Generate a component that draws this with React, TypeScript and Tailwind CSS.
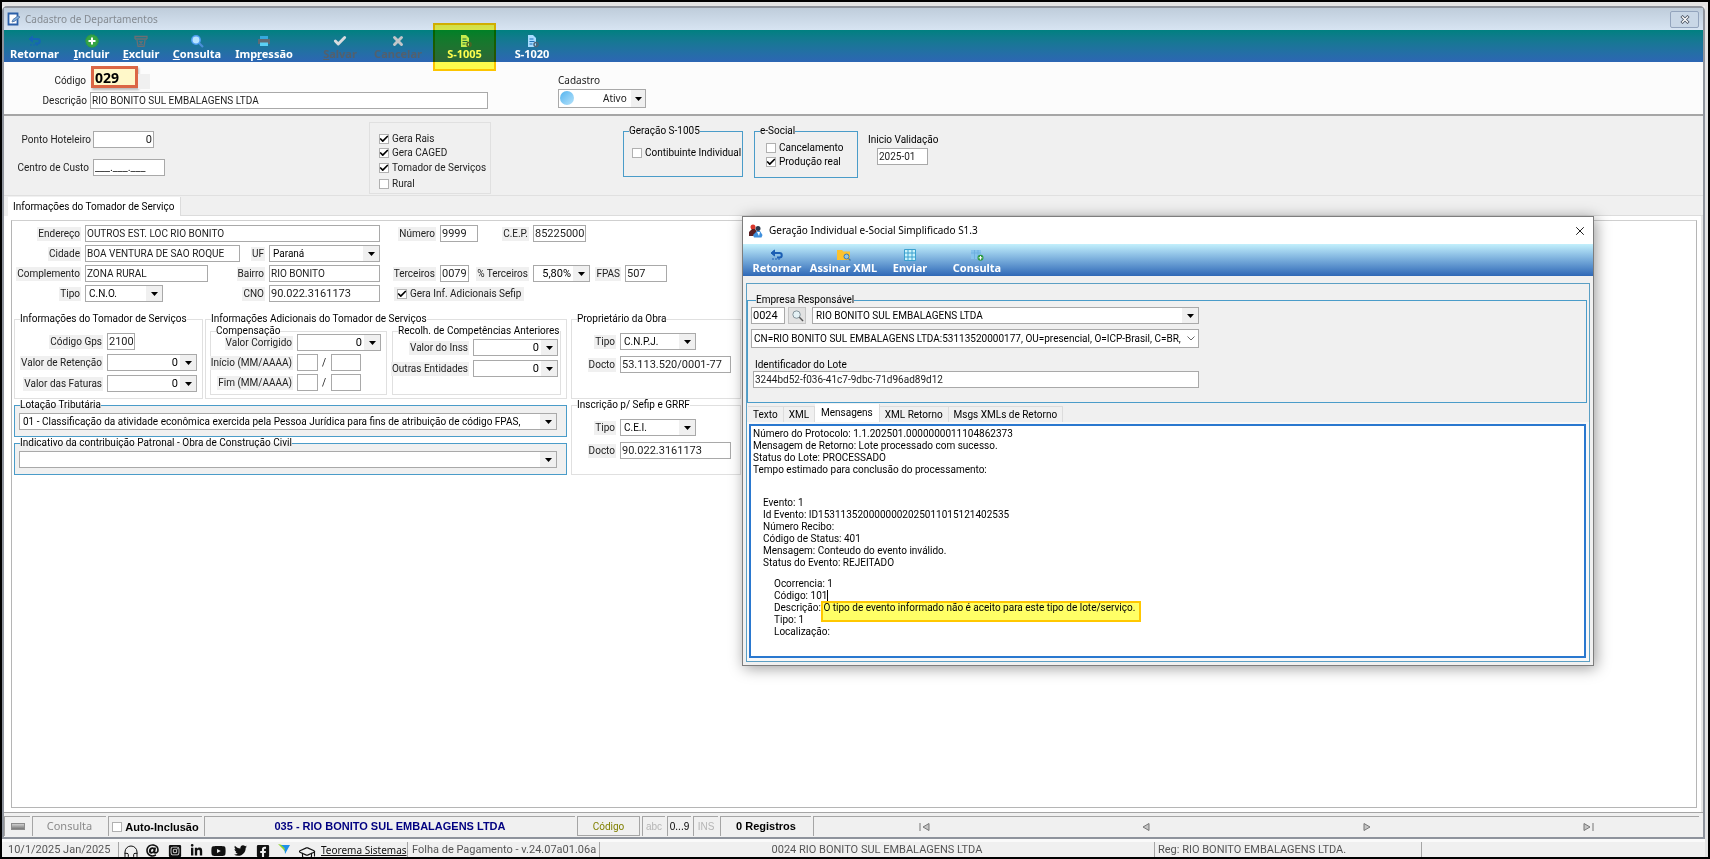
import type { ReactNode } from "react";
import clsx from "clsx";
import { FaAt, FaFacebookSquare, FaInstagramSquare, FaLinkedinIn, FaTwitter, FaYoutube } from "react-icons/fa";
import { Check, GraduationCap, Headphones, X } from "lucide-react";

const box = "border border-[#a9a9a9] bg-white leading-[13px] text-[#1c1c1c] outline-none";

function Caret() {
  return (
    <svg viewBox="0 0 7 4" className="h-1 w-[7px]" aria-hidden="true">
      <path d="M0 0h7L3.5 4z" fill="#000" />
    </svg>
  );
}

function Label({ id, className, children }: { id: string; className?: string; children: ReactNode }) {
  return (
    <div className={clsx("flex shrink-0 justify-end", className)}>
      <label htmlFor={id} className="bg-[#f0f0f0] px-px leading-[14px] whitespace-nowrap">
        {children}
      </label>
    </div>
  );
}

function TextBox({ id, value, numeric, className }: { id: string; value?: string; numeric?: boolean; className?: string }) {
  return (
    <input
      id={id}
      type="text"
      defaultValue={value}
      className={clsx(box, numeric ? "text-[11px]" : "text-[10px]", "h-[17px] shrink-0 px-px pb-px", className)}
    />
  );
}

function Combo({ id, value, className, label }: { id: string; value: string; className?: string; label?: string }) {
  return (
    <div className={clsx("relative h-[17px] shrink-0", className)}>
      <select id={id} aria-label={label} className={clsx(box, "h-full w-full appearance-none pr-4 pl-[3px] text-black")}>
        <option>{value}</option>
      </select>
      <span className="pointer-events-none absolute top-px right-px bottom-px flex w-4 items-center justify-center bg-[#f0f0f0]">
        <Caret />
      </span>
    </div>
  );
}

/** Numeric edit with a drop-down calculator button. */
function Calc({ id, value, className }: { id: string; value: string; className?: string }) {
  return (
    <div className={clsx("flex h-[17px] shrink-0 border border-[#a9a9a9] bg-white", className)}>
      <input
        id={id}
        type="text"
        defaultValue={value}
        className="min-w-0 flex-1 pr-[2px] text-right text-[11px] leading-[13px] text-black outline-none"
      />
      <button type="button" aria-label="Calculadora" className="flex w-4 items-center justify-center bg-[#f0f0f0]">
        <Caret />
      </button>
    </div>
  );
}

function Tick({ label, checked, className }: { label: string; checked?: boolean; className?: string }) {
  return (
    <label className={clsx("flex items-center gap-[3px] leading-[14px] whitespace-nowrap", className)}>
      <span className="relative flex h-[10px] w-[10px] shrink-0">
        <input
          type="checkbox"
          defaultChecked={checked}
          className="peer h-full w-full appearance-none border border-[#b0b0b0] bg-white"
        />
        <Check className="pointer-events-none absolute inset-0 hidden h-[10px] w-[10px] text-black peer-checked:block" strokeWidth={4} />
      </span>
      {label}
    </label>
  );
}

function Group({ title, blue, className, children }: { title: string; blue?: boolean; className?: string; children: ReactNode }) {
  return (
    <fieldset className={clsx("min-w-0 border", blue ? "border-[#4a9cc9]" : "border-[#e0e0e0]", className)}>
      <legend className="ml-[5px] h-3 leading-3 whitespace-nowrap text-black">{title}</legend>
      {children}
    </fieldset>
  );
}

function Row({ children }: { children: ReactNode }) {
  return <div className="flex h-[17px] items-center gap-1">{children}</div>;
}

function ReturnIcon({ color }: { color: string }) {
  return (
    <svg viewBox="0 0 14 12" className="h-3 w-[14px]" fill="none" stroke={color} aria-hidden="true">
      <path d="M3 4h6.500a2 2 0 0 1 0 4.500H7" strokeWidth="2" />
      <path d="M4.500 1v6L1 4z" fill={color} />
      <path d="M2 10h2M5 10h2M8 10h2" />
    </svg>
  );
}

function PlusIcon() {
  return (
    <svg viewBox="0 0 14 14" className="h-[14px] w-[14px]" aria-hidden="true">
      <circle cx="7" cy="7" r="6.300" fill="#35a445" stroke="#2b9a3f" strokeDasharray="2 1" />
      <path d="M7 3.500v7M3.500 7h7" stroke="#fff" strokeWidth="2" />
    </svg>
  );
}

function TrashIcon() {
  return (
    <svg viewBox="0 0 14 12" className="h-3 w-[14px]" fill="none" stroke="#6b6f73" aria-hidden="true">
      <path d="M1 4V1.500h12V4M1 4h12M3 5l1 6.500h6L11 5M5.500 6l3 4M8.500 6l-3 4" strokeWidth="1.300" />
    </svg>
  );
}

function LensIcon() {
  return (
    <svg viewBox="0 0 14 14" className="h-[14px] w-[14px]" aria-hidden="true">
      <path d="M8.500 8.500l4.500 4.500" stroke="#4b8fd8" strokeWidth="2.200" />
      <circle cx="6" cy="6" r="4.200" fill="#b7e3ff" stroke="#4d9df0" strokeWidth="1.500" />
    </svg>
  );
}

function PrinterIcon() {
  return (
    <svg viewBox="0 0 14 12" className="h-3 w-[14px]" aria-hidden="true">
      <path d="M3 1h8v3H3z" fill="#35a9dc" />
      <path d="M1 4h12v5H1z" fill="#5f6a74" />
      <path d="M3 7.500h8V11H3z" fill="#5bd0f5" />
    </svg>
  );
}

function SheetIcon({ color }: { color: string }) {
  return (
    <svg viewBox="0 0 14 14" className="h-[14px] w-[14px]" aria-hidden="true">
      <path d="M3 1h5l3 3v9H3z" fill={color} />
      <path d="M4.500 5h4M4.500 7.500h5M4.500 10h3" stroke="#1d6fb8" />
      <circle cx="11" cy="10.500" r="2" fill="none" stroke="#4e6478" strokeWidth="1.500" />
    </svg>
  );
}

function FolderLensIcon() {
  return (
    <svg viewBox="0 0 14 12" className="h-3 w-[14px]" aria-hidden="true">
      <path d="M0 1h5l1.500 1.500H13V11H0z" fill="#fcc22d" />
      <circle cx="9.500" cy="7.500" r="2.500" fill="#8ec7ea" stroke="#3d77ad" />
      <path d="M11.500 9.500l2 2" stroke="#3d77ad" strokeWidth="1.300" />
    </svg>
  );
}

function GridIcon() {
  return (
    <svg viewBox="0 0 12 12" className="h-3 w-3" aria-hidden="true">
      <path d="M1 1h10v10H1z" fill="#c9f3fb" />
      <path d="M.500.500h11v11H.500zM4 1v10M8 1v10M1 4h10M1 8h10" fill="none" stroke="#3ba0cf" />
    </svg>
  );
}

function GridPlusIcon() {
  return (
    <svg viewBox="0 0 14 12" className="h-3 w-[14px]" aria-hidden="true">
      <path d="M1 1h10v9H1z" fill="#86c3ec" />
      <path d="M4.500 1v9M8 1v9M1 4h10" stroke="#6fb0e0" />
      <circle cx="10.500" cy="8.800" r="3" fill="#2e9b44" />
      <path d="M10.500 7v3.600M8.700 8.800h3.600" stroke="#fff" />
    </svg>
  );
}

function FormIcon() {
  return (
    <svg viewBox="0 0 14 14" className="h-[14px] w-[14px]" aria-hidden="true">
      <path d="M1.500 1.500h9v11h-9z" fill="#fff" stroke="#2a5fa8" strokeWidth="1.800" />
      <path d="M13 5L8 9l-3 1 1-2.500L11 4z" stroke="#5a7fae" fill="#7fb0e0" />
    </svg>
  );
}

function PeopleIcon() {
  return (
    <svg viewBox="0 0 14 14" className="h-[14px] w-[14px]" aria-hidden="true">
      <circle cx="4" cy="3" r="2.500" fill="#d8382c" />
      <path d="M0 12V8l3-3h3l2 3-2 4z" fill="#5b1f22" />
      <circle cx="9" cy="4.500" r="2.500" fill="#2b3a4e" />
      <path d="M4 11l4-4h3l2.500 4-1 2.500H5z" fill="#3f8fdc" />
      <path d="M8 8l2 4 1-4z" fill="#fff" />
    </svg>
  );
}

function ToolButton({ icon, className, disabled, children }: { icon: ReactNode; className?: string; disabled?: boolean; children: ReactNode }) {
  return (
    <button
      type="button"
      disabled={disabled}
      className={clsx(
        "relative flex h-full shrink-0 flex-col items-center pt-1 text-[11px] leading-3 font-bold whitespace-nowrap",
        disabled ? "text-[#53606c]" : "text-white",
        className,
      )}
    >
      <span className="flex h-[14px] items-center">{icon}</span>
      <span>{children}</span>
    </button>
  );
}

const Key = ({ children }: { children: string }) => <span className="underline">{children}</span>;

function MainToolbar() {
  return (
    <div className="flex h-8 bg-linear-to-b from-[#008080] to-[#2d66b4] font-['Noto_Sans',sans-serif]">
      <ToolButton className="w-[61px]" icon={<ReturnIcon color="#1565b5" />}>Retornar</ToolButton>
      <ToolButton className="w-[53px]" icon={<PlusIcon />}><Key>I</Key>ncluir</ToolButton>
      <ToolButton className="w-[46px]" icon={<TrashIcon />}><Key>E</Key>xcluir</ToolButton>
      <ToolButton className="w-[66px]" icon={<LensIcon />}><Key>C</Key>onsulta</ToolButton>
      <ToolButton className="w-[68px]" icon={<PrinterIcon />}>Imp<Key>r</Key>essão</ToolButton>
      <ToolButton className="ml-[14px] w-[56px]" disabled icon={<Check className="h-[14px] w-[14px] text-[#d9dcdf]" strokeWidth={5} />}>
        <Key>S</Key>alvar
      </ToolButton>
      <ToolButton className="w-[60px]" disabled icon={<X className="h-[14px] w-[14px] text-[#c3c6c9]" strokeWidth={5} />}>
        Cancelar
      </ToolButton>
      <ToolButton className="ml-[5px] w-[63px]" icon={<SheetIcon color="#c6ecff" />}>
        S-1005
        <span className="absolute inset-x-0 -top-[7px] -bottom-[9px] z-10 border-2 border-[#ffc800] bg-[#ffff4d] mix-blend-multiply" />
      </ToolButton>
      <ToolButton className="ml-[6px] w-[60px]" icon={<SheetIcon color="#a9dcff" />}>S-1020</ToolButton>
    </div>
  );
}

function Header() {
  return (
    <div className="flex h-[54px] border-b-2 border-[#a6a6a6] bg-[#fcfcfc]">
      <div className="w-[554px] shrink-0">
        <div className="flex pt-1">
          <label htmlFor="codigo" className="mt-2 w-[83px] pr-px text-right leading-[14px]">Código</label>
          <input
            id="codigo"
            defaultValue="029"
            className="ml-[4px] h-[22px] w-[47px] border-3 border-[#db6645] bg-[#fff8c9] px-px font-['Noto_Sans',sans-serif] text-[14px] leading-4 font-bold text-black shadow-[1px_2px_2px_#bbb] outline-none"
          />
          <span className="mt-2 h-[15px] w-3 bg-[#f0f0f0]" />
        </div>
        <div className="mt-[3px] flex items-center gap-[3px]">
          <label htmlFor="descricao" className="w-[83px] text-right leading-[14px]">Descrição</label>
          <TextBox id="descricao" value="RIO BONITO SUL EMBALAGENS LTDA" className="w-[398px]" />
        </div>
      </div>
      <div className="pt-[11px] font-['Noto_Sans',sans-serif]">
        <label htmlFor="cadastro" className="block leading-[14px]">Cadastro</label>
        <div className="relative mt-[2px] h-[19px] w-[88px]">
          <select id="cadastro" className="h-full w-full appearance-none border border-[#a9a9a9] bg-white pl-11 leading-[15px] outline-none">
            <option>Ativo</option>
          </select>
          <span className="pointer-events-none absolute top-[2px] left-[2px] h-[14px] w-[14px] rounded-full bg-linear-to-br from-[#4fb3ee] to-[#b5e3fb]" />
          <span className="pointer-events-none absolute top-px right-px bottom-px flex w-[14px] items-center justify-center bg-[#f0f0f0]">
            <Caret />
          </span>
        </div>
      </div>
    </div>
  );
}

function Options() {
  return (
    <div className="flex h-[80px] border-b border-[#e0e0e0] pl-1">
      <div className="w-[361px] shrink-0 pt-[15px]">
        <div className="flex items-center gap-[2px]">
          <label htmlFor="ponto" className="w-[83px] text-right leading-[14px] whitespace-nowrap">Ponto Hoteleiro</label>
          <TextBox id="ponto" value="0" numeric className="w-[61px] text-right" />
        </div>
        <div className="mt-[11px] flex items-center gap-[2px]">
          <label htmlFor="centro" className="w-[83px] pr-[2px] text-right leading-[14px] whitespace-nowrap">Centro de Custo</label>
          <TextBox id="centro" value="___.___.___" numeric className="w-[72px]" />
        </div>
      </div>
      <div className="mt-[6px] h-[72px] w-[122px] shrink-0 border border-[#e0e0e0] pt-[9px] pl-[9px]">
        <Tick label="Gera Rais" checked />
        <Tick label="Gera CAGED" checked />
        <Tick label="Tomador de Serviços" checked className="mt-px" />
        <Tick label="Rural" className="mt-[2px]" />
      </div>
      <Group title="Geração S-1005" blue className="mt-[9px] ml-[132px] h-[52px] w-[120px] shrink-0">
        <Tick label="Contibuinte Individual" className="mt-[9px] ml-[8px] text-black" />
      </Group>
      <Group title="e-Social" blue className="mt-[9px] ml-[11px] h-[53px] w-[104px] shrink-0">
        <Tick label="Cancelamento" className="mt-[4px] ml-[11px] text-black" />
        <Tick label="Produção real" checked className="ml-[11px] text-black" />
      </Group>
      <div className="ml-[10px] pt-[17px] text-black">
        <label htmlFor="inicio" className="block leading-[14px]">Inicio Validação</label>
        <TextBox id="inicio" value="2025-01" className="mt-px ml-[9px] w-[51px]" />
      </div>
    </div>
  );
}

function ServiceForm() {
  return (
    <div className="flex-1 border border-[#b5b5b5] border-t-[#cfcfcf] bg-white pt-1">
      <div className="flex flex-col gap-[3px]">
        <Row>
          <Label id="endereco" className="w-[69px]">Endereço</Label>
          <TextBox id="endereco" value="OUTROS EST. LOC RIO BONITO" className="w-[295px]" />
          <Label id="numero" className="w-[52px]">Número</Label>
          <TextBox id="numero" value="9999" numeric className="w-[38px]" />
          <Label id="cep" className="w-[47px]">C.E.P.</Label>
          <TextBox id="cep" value="85225000" numeric className="w-[53px]" />
        </Row>
        <Row>
          <Label id="cidade" className="w-[69px]">Cidade</Label>
          <TextBox id="cidade" value="BOA VENTURA DE SAO ROQUE" className="w-[155px]" />
          <Label id="uf" className="w-[21px]">UF</Label>
          <Combo id="uf" value="Paraná" className="w-[111px]" />
        </Row>
        <Row>
          <Label id="complemento" className="w-[69px]">Complemento</Label>
          <TextBox id="complemento" value="ZONA RURAL" className="w-[123px]" />
          <Label id="bairro" className="w-[53px]">Bairro</Label>
          <TextBox id="bairro" value="RIO BONITO" className="w-[111px]" />
          <Label id="terceiros" className="w-[52px]">Terceiros</Label>
          <TextBox id="terceiros" value="0079" numeric className="w-[29px]" />
          <Label id="pterceiros" className="w-[56px]">% Terceiros</Label>
          <Calc id="pterceiros" value="5,80%" className="w-[57px]" />
          <Label id="fpas" className="w-[27px]">FPAS</Label>
          <TextBox id="fpas" value="507" numeric className="w-[42px]" />
        </Row>
        <Row>
          <Label id="tipo" className="w-[69px]">Tipo</Label>
          <Combo id="tipo" value="C.N.O." className="w-[78px]" />
          <Label id="cno" className="w-[98px]">CNO</Label>
          <TextBox id="cno" value="90.022.3161173" numeric className="w-[111px]" />
          <Tick label="Gera Inf. Adicionais Sefip" checked className="ml-[10px] bg-[#f0f0f0] px-[3px]" />
        </Row>
      </div>

      <div className="mt-[11px] flex gap-1 pl-[2px]">
        <div className="w-[553px] shrink-0">
          <div className="flex h-[86px] gap-[2px]">
            <Group title="Informações do Tomador de Serviços" className="w-[189px] shrink-0">
              <div className="flex flex-col gap-1 pt-2">
                <Row>
                  <Label id="gps" className="w-[88px]">Código Gps</Label>
                  <TextBox id="gps" value="2100" numeric className="w-[28px]" />
                </Row>
                <Row>
                  <Label id="retencao" className="w-[88px]">Valor de Retenção</Label>
                  <Calc id="retencao" value="0" className="w-[90px]" />
                </Row>
                <Row>
                  <Label id="faturas" className="w-[88px]">Valor das Faturas</Label>
                  <Calc id="faturas" value="0" className="w-[90px]" />
                </Row>
              </div>
            </Group>
            <Group title="Informações Adicionais do Tomador de Serviços" className="w-[362px] shrink-0">
              <div className="flex gap-[5px] pl-1">
                <Group title="Compensação" className="h-[70px] w-[177px] shrink-0">
                  <div className="-mt-[3px] flex flex-col gap-[3px]">
                    <Row>
                      <Label id="corrigido" className="w-[82px]">Valor Corrigido</Label>
                      <Calc id="corrigido" value="0" className="w-[84px]" />
                    </Row>
                    <Row>
                      <Label id="iniMes" className="w-[82px]">Início (MM/AAAA)</Label>
                      <TextBox id="iniMes" className="w-[21px]" />
                      <span className="w-[5px]">/</span>
                      <input aria-label="Ano de início" className={clsx(box, "h-[17px] w-[30px]")} />
                    </Row>
                    <Row>
                      <Label id="fimMes" className="w-[82px]">Fim (MM/AAAA)</Label>
                      <TextBox id="fimMes" className="w-[21px]" />
                      <span className="w-[5px]">/</span>
                      <input aria-label="Ano de fim" className={clsx(box, "h-[17px] w-[30px]")} />
                    </Row>
                  </div>
                </Group>
                <Group title="Recolh. de Competências Anteriores" className="h-[70px] w-[169px] shrink-0">
                  <div className="flex flex-col gap-1 pt-[2px]">
                    <Row>
                      <Label id="inss" className="w-[76px]">Valor do Inss</Label>
                      <Calc id="inss" value="0" className="w-[85px]" />
                    </Row>
                    <Row>
                      <Label id="outras" className="w-[76px]">Outras Entidades</Label>
                      <Calc id="outras" value="0" className="w-[85px]" />
                    </Row>
                  </div>
                </Group>
              </div>
            </Group>
          </div>
          <Group title="Lotação Tributária" blue className="h-[38px] bg-[#f0f0f0]">
            <Combo
              id="lotacao"
              label="Lotação Tributária"
              value="01 - Classificação da atividade econômica exercida pela Pessoa Jurídica para fins de atribuição de código FPAS,"
              className="mt-[2px] ml-[4px] w-[538px]"
            />
          </Group>
          <Group title="Indicativo da contribuição Patronal - Obra de Construção Civil" blue className="h-[38px] bg-[#f0f0f0]">
            <Combo id="indicativo" label="Indicativo da contribuição Patronal" value="" className="mt-[2px] ml-[4px] w-[538px]" />
          </Group>
        </div>
        <div className="w-[170px] shrink-0">
          <Group title="Proprietário da Obra" className="h-[86px]">
            <div className="flex flex-col gap-[6px] pt-2">
              <Row>
                <Label id="tipoObra" className="w-[44px]">Tipo</Label>
                <Combo id="tipoObra" value="C.N.P.J." className="w-[76px]" />
              </Row>
              <Row>
                <Label id="doctoObra" className="w-[44px]">Docto</Label>
                <TextBox id="doctoObra" value="53.113.520/0001-77" numeric className="w-[111px]" />
              </Row>
            </div>
          </Group>
          <Group title="Inscrição p/ Sefip e GRRF" className="h-[76px]">
            <div className="flex flex-col gap-[6px] pt-2">
              <Row>
                <Label id="tipoSefip" className="w-[44px]">Tipo</Label>
                <Combo id="tipoSefip" value="C.E.I." className="w-[76px]" />
              </Row>
              <Row>
                <Label id="doctoSefip" className="w-[44px]">Docto</Label>
                <TextBox id="doctoSefip" value="90.022.3161173" numeric className="w-[111px]" />
              </Row>
            </div>
          </Group>
        </div>
      </div>
    </div>
  );
}

const cell = "flex h-5 shrink-0 items-center justify-center border-t border-l border-[#a5a5a5] whitespace-nowrap";

function RecordBar() {
  return (
    <div className="flex gap-[2px] border-t border-[#a5a5a5] pt-[3px] pr-[4px] pb-[1px] font-['Liberation_Sans',sans-serif] text-[11px] text-black">
      <button type="button" aria-label="Menu" className={clsx(cell, "w-[26px]")}>
        <span className="h-[7px] w-[14px] border border-[#8c8c8c] bg-linear-to-b from-[#d0d0d0] to-[#777]" />
      </button>
      <div className={clsx(cell, "w-[74px] font-['Noto_Sans',sans-serif] text-[#8a8a8a]")}>Consulta</div>
      <div className={clsx(cell, "w-[94px] font-bold")}>
        <Tick label="Auto-Inclusão" />
      </div>
      <div className={clsx(cell, "w-[371px] font-bold text-[#000080]")}>035 - RIO BONITO SUL EMBALAGENS LTDA</div>
      <button type="button" className={clsx(cell, "w-[63px] border-r border-b font-['Roboto',sans-serif] text-[10px] text-[#808000]")}>Código</button>
      <div className={clsx(cell, "w-[23px] text-[10px] text-[#b5b5b5]")}>abc</div>
      <div className={clsx(cell, "w-[24px] text-[10px]")}>0...9</div>
      <div className={clsx(cell, "w-[25px] text-[10px] text-[#b5b5b5]")}>INS</div>
      <div className={clsx(cell, "w-[91px] font-bold")}>0 Registros</div>
      <div className="grid h-5 flex-1 grid-cols-4 border-t border-l border-[#a5a5a5]">
        {[
          ["Primeiro", "M1 0v8M10 0.500v7L4 4z"],
          ["Anterior", "M9 0.500v7L3 4z"],
          ["Próximo", "M2 0.500v7L8 4z"],
          ["Último", "M10 0v8M1 0.500v7L7 4z"],
        ].map(([name, d]) => (
          <button key={name} type="button" aria-label={name} className="flex items-center justify-center">
            <svg viewBox="0 0 11 8" className="h-2 w-[11px]" fill="#c4c4c4" stroke="#777">
              <path d={d} />
            </svg>
          </button>
        ))}
      </div>
    </div>
  );
}

function StatusBar() {
  const part = "flex h-full shrink-0 items-center whitespace-nowrap";
  return (
    <div className="flex h-[15px] overflow-hidden bg-[#f0f0f0] text-[11px] leading-[15px] text-[#555]">
      <div className={clsx(part, "w-[116px] pl-[6px]")}>10/1/2025 Jan/2025</div>
      <div className={clsx(part, "w-[289px] items-start border-l border-[#a5a5a5] pt-[2px] text-[#111]")}>
        <Headphones className="ml-[4px] h-[16px] w-[16px] shrink-0" strokeWidth={1.5} />
        <FaAt className="ml-[7px] h-[13px] w-[13px] shrink-0" />
        <FaInstagramSquare className="ml-[9px] h-[14px] w-[14px] shrink-0" />
        <FaLinkedinIn className="ml-[8px] h-[13px] w-[13px] shrink-0" />
        <FaYoutube className="ml-[8px] h-[14px] w-[15px] shrink-0" />
        <FaTwitter className="ml-[8px] h-[13px] w-[13px] shrink-0" />
        <FaFacebookSquare className="ml-[9px] h-[14px] w-[14px] shrink-0" />
        <svg viewBox="0 0 12 10" className="ml-[8px] h-[10px] w-3 shrink-0" aria-hidden="true">
          <path d="M0 0l6 1.500L8 9 5 5z" fill="#8fd42a" />
          <path d="M3 1l9 0L7 10 6.500 4z" fill="#1f8fe8" />
        </svg>
        <GraduationCap className="ml-[7px] h-[18px] w-[20px] shrink-0" strokeWidth={1.5} />
        <a href="#teorema" className="ml-[4px] font-['Noto_Sans',sans-serif] text-[10px] leading-[13px] underline">Teorema Sistemas</a>
      </div>
      <div className={clsx(part, "w-[192px] border-l border-[#a5a5a5] pl-1")}>Folha de Pagamento - v.24.07a01.06a</div>
      <div className="flex-1 border-l border-[#a5a5a5] text-center">0024 RIO BONITO SUL EMBALAGENS LTDA</div>
      <div className={clsx(part, "w-[267px] border-l border-[#a5a5a5] pl-[3px]")}>Reg: RIO BONITO EMBALAGENS LTDA.</div>
      <div className={clsx(part, "w-[284px] border-l border-[#a5a5a5]")} />
    </div>
  );
}

const TABS = ["Texto", "XML", "Mensagens", "XML Retorno", "Msgs XMLs de Retorno"];

function EventDialog() {
  return (
    <section
      aria-label="Geração Individual e-Social"
      className="absolute top-[216px] left-[742px] flex h-[450px] w-[852px] flex-col border border-[#7d7d7d] bg-[#f0f0f0] text-black shadow-[2px_2px_14px_rgba(0,0,0,0.4)]"
    >
      <div className="flex h-[27px] shrink-0 items-center bg-white pr-[6px] pl-[6px]">
        <PeopleIcon />
        <h2 className="ml-[6px] flex-1 font-['Noto_Sans',sans-serif]">
          Geração Individual e-Social Simplificado S1.3
        </h2>
        <button type="button" aria-label="Fechar">
          <X className="h-[14px] w-[14px]" strokeWidth={1.5} />
        </button>
      </div>
      <div className="flex h-8 shrink-0 bg-linear-to-b from-[#c3f0fc] to-[#2f68b6] pl-[5px] font-['Noto_Sans',sans-serif]">
        <ToolButton className="w-[58px]" icon={<ReturnIcon color="#1c5fb4" />}>Retornar</ToolButton>
        <ToolButton className="w-[75px]" icon={<FolderLensIcon />}>Assinar XML</ToolButton>
        <ToolButton className="w-[58px]" icon={<GridIcon />}>Enviar</ToolButton>
        <ToolButton className="ml-[8px] w-[60px]" icon={<GridPlusIcon />}>Consulta</ToolButton>
      </div>
      <div className="mx-[3px] mt-[7px] mb-[3px] flex flex-1 flex-col border border-[#5b9fc4] pt-[10px]">
        <Group title="Empresa Responsável" blue className="mr-[2px] h-[109px] shrink-0 pl-[3px]">
          <div className="flex items-center pt-px">
            <input aria-label="Código da empresa" defaultValue="0024" className={clsx(box, "h-[17px] w-[34px] px-px text-[11px] text-black")} />
            <button type="button" aria-label="Localizar" className="ml-[3px] flex h-[17px] w-[18px] items-center justify-center border border-[#c4c4c4] bg-[#e2e2e2]">
              <svg viewBox="0 0 14 14" className="h-[13px] w-[13px]" fill="none" aria-hidden="true">
                <circle cx="6" cy="6" r="4" stroke="#7d8c94" fill="#e4f1f5" />
                <path d="M9 9l4 4" stroke="#555" strokeWidth="1.500" />
              </svg>
            </button>
            <Combo id="empresa" label="Empresa" value="RIO BONITO SUL EMBALAGENS LTDA" className="ml-[6px] w-[387px]" />
          </div>
          <div className="relative mt-[5px] h-[19px] w-[448px]">
            <select aria-label="Certificado" className={clsx(box, "h-full w-full appearance-none overflow-hidden pr-4 pl-[2px] text-black")}>
              <option>CN=RIO BONITO SUL EMBALAGENS LTDA:53113520000177, OU=presencial, O=ICP-Brasil, C=BR,</option>
            </select>
            <svg viewBox="0 0 8 5" className="pointer-events-none absolute top-[7px] right-[4px] h-[5px] w-2" fill="none" stroke="#666">
              <path d="M.500.500L4 4 7.500.500" />
            </svg>
          </div>
          <label htmlFor="lote" className="mt-[10px] ml-[4px] block leading-[13px]">Identificador do Lote</label>
          <TextBox id="lote" value="3244bd52-f036-41c7-9dbc-71d96ad89d12" className="ml-[2px] w-[446px]" />
        </Group>
        <div role="tablist" className="mt-[3px] flex h-[16px] shrink-0 items-end pl-px">
          {TABS.map((tab) => (
            <button
              key={tab}
              type="button"
              role="tab"
              aria-selected={tab === "Mensagens"}
              className={clsx(
                "border-r border-[#dcdcdc] whitespace-nowrap",
                tab === "Mensagens" ? "h-[18px] bg-white px-[6px] pb-[2px]" : "h-[16px] border-t px-[5px]",
              )}
            >
              {tab}
            </button>
          ))}
        </div>
        <div className="flex flex-1 bg-[#f8f8f8] pt-[2px] pr-[3px] pb-[3px] pl-[2px]">
          <div className="flex-1 border-2 border-[#2a78cf] bg-white pt-[2px] pl-[2px] leading-3 whitespace-pre">
            <p>{"Número do Protocolo: 1.1.202501.0000000011104862373\nMensagem de Retorno: Lote processado com sucesso.\nStatus do Lote: PROCESSADO\nTempo estimado para conclusão do processamento:"}</p>
            <p className="mt-[21px] pl-[10px]">
              {"Evento: 1\nId Evento: ID1531135200000002025011015121402535\nNúmero Recibo:\nCódigo de Status: 401\nMensagem: Conteudo do evento inválido.\nStatus do Evento: REJEITADO"}
            </p>
            <div className="mt-[9px] pl-[21px]">
              <p>Ocorrencia: 1</p>
              <p>Código: <span className="border-r border-black">101</span></p>
              <p>
                {"Descrição: "}
                <span className="relative">
                  O tipo de evento informado não é aceito para este tipo de lote/serviço.
                  <span className="absolute -top-px -right-[6px] -left-[2px] h-[21px] border-2 border-[#ffc800] bg-[#ffff66] mix-blend-multiply" />
                </span>
              </p>
              <p>Tipo: 1</p>
              <p>Localização:</p>
            </div>
          </div>
        </div>
      </div>
    </section>
  );
}

export default function App() {
  return (
    <div className="relative flex min-h-screen flex-col bg-black p-[2px] font-['Roboto',sans-serif] text-[10px] text-[#222]">
      <div className="flex flex-1 flex-col border-t-4 border-r-3 border-[#e4e4e4] bg-[#f0f0f0]">
        <main className="flex flex-1 flex-col rounded-t-[5px] border-2 border-[#8e939c] bg-[#f0f0f0]">
          <div className="flex h-[22px] items-center bg-linear-to-b from-[#bfcddb] to-[#d7e4f2] pr-[4px] pl-[3px]">
            <FormIcon />
            <h1 className="ml-[4px] flex-1 font-['Noto_Sans',sans-serif] text-[#858b92]">Cadastro de Departamentos</h1>
            <button type="button" aria-label="Fechar" className="flex h-[17px] w-[29px] items-center justify-center rounded-[2px] border border-[#93a4bd] bg-[#c9d7e6]">
              <svg viewBox="0 0 10 9" className="h-[9px] w-[10px]" aria-hidden="true">
                <path d="M1.500 1l7 7M8.500 1l-7 7" stroke="#4c5564" strokeWidth="3" />
                <path d="M2 1.500l6 6M8 1.500l-6 6" stroke="#fff" strokeWidth="1.400" />
              </svg>
            </button>
          </div>
          <MainToolbar />
          <Header />
          <Options />
          <div role="tablist" className="flex h-[20px] pl-1">
            <button type="button" role="tab" aria-selected className="mt-px border-r border-[#dcdcdc] bg-white px-[5px] text-black">
              Informações do Tomador de Serviço
            </button>
            <span className="flex-1 border-b border-[#dcdcdc]" />
          </div>
          <div className="flex flex-1 flex-col border-r-2 border-[#e6e6e6] bg-white pt-1 pr-[4px] pb-[4px] pl-[7px]">
            <ServiceForm />
          </div>
          <RecordBar />
        </main>
        <div className="h-[3px] bg-[#fafafa]" />
        <StatusBar />
      </div>
      <EventDialog />
    </div>
  );
}
